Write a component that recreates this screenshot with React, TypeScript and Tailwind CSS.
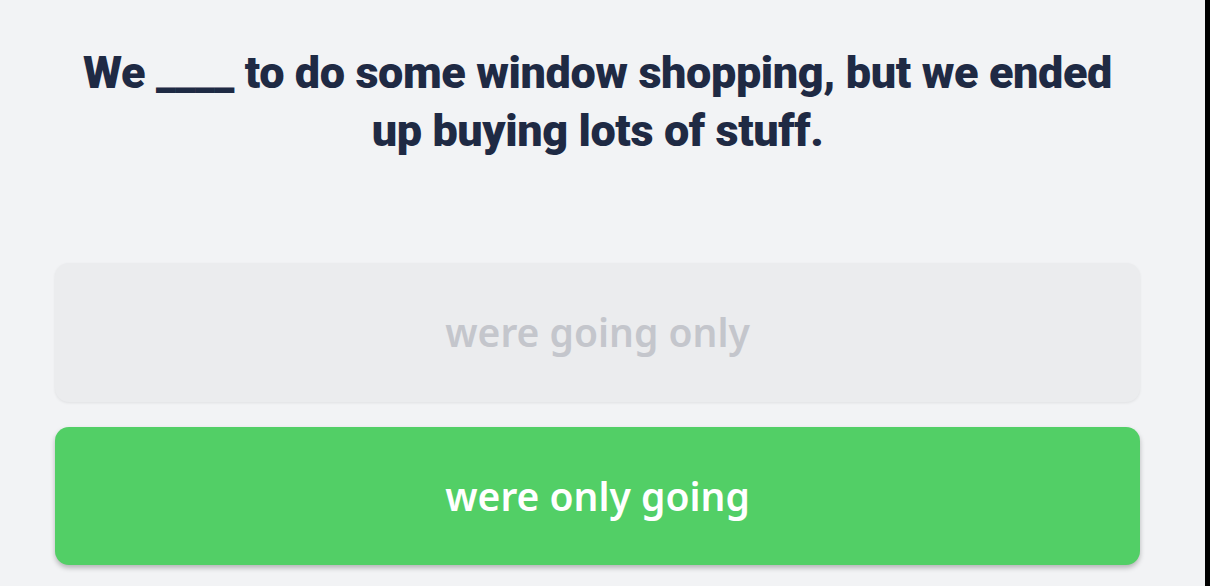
export default function App() {
    return (
        <div className="w-[1210px] h-[586px] bg-[#f2f3f5] border-r-[5px] border-black overflow-hidden font-['Roboto',sans-serif]">
            <div className="w-[1195px] px-[55px] pt-[44px] flex flex-col">
                <h1 className="text-center text-[45px] leading-[58px] font-black tracking-[-0.4px] text-[#1f2a44] px-[18px]">
                    We ____ to do some window shopping, but we ended up buying lots of stuff.
                </h1>
                <div className="mt-[103px] flex flex-col gap-[25px]">
                    <button className="h-[139px] w-full rounded-[14px] bg-[#ebecee] shadow-[0_1px_3px_rgba(0,0,0,0.08)] text-[39px] font-semibold text-[#c4c6cc] font-['Noto_Sans',sans-serif]">
                        were going only
                    </button>
                    <button className="h-[138px] w-full rounded-[14px] bg-[#52cf66] shadow-[0_3px_5px_rgba(0,0,0,0.25)] text-[39px] font-semibold text-white font-['Noto_Sans',sans-serif]">
                        were only going
                    </button>
                </div>
            </div>
        </div>
    );
}
